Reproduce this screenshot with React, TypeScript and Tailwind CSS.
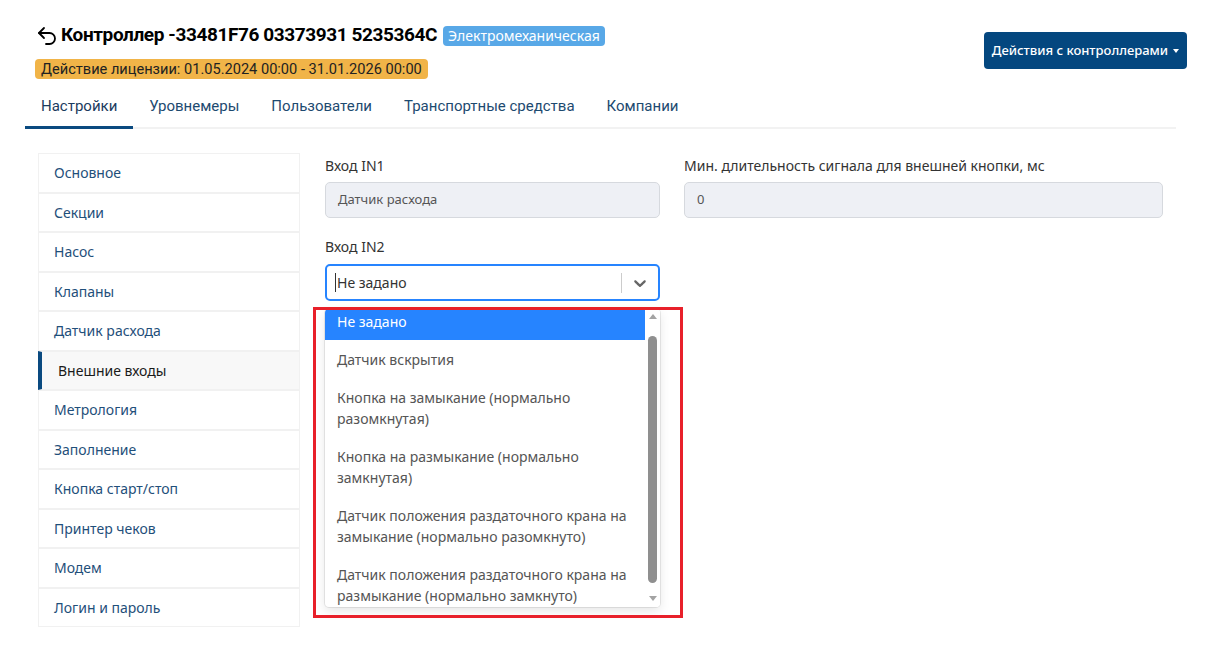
import { Undo2 } from "lucide-react";

const sideItems = [
    'Основное',
    'Секции',
    'Насос',
    'Клапаны',
    'Датчик расхода',
    'Внешние входы',
    'Метрология',
    'Заполнение',
    'Кнопка старт/стоп',
    'Принтер чеков',
    'Модем',
    'Логин и пароль',
];

const tabs = ['Настройки', 'Уровнемеры', 'Пользователи', 'Транспортные средства', 'Компании'];

const options: string[][] = [
    ['Не задано'],
    ['Датчик вскрытия'],
    ['Кнопка на замыкание (нормально', 'разомкнутая)'],
    ['Кнопка на размыкание (нормально', 'замкнутая)'],
    ['Датчик положения раздаточного крана на', 'замыкание (нормально разомкнуто)'],
    ['Датчик положения раздаточного крана на', 'размыкание (нормально замкнуто)'],
];

const App = () => {
    const activeSide = 'Внешние входы';

    return (
        <div className="min-h-screen bg-white px-[25px] pt-[25px] font-['Noto_Sans',sans-serif]">
            {/* header */}
            <div className="flex items-center justify-between pl-[11px] pr-[1px]">
                <div className="flex flex-col">
                    <div className="flex items-center h-[21px]">
                        <Undo2 size={24} strokeWidth={1.8} className="text-black -ml-[1px] mr-[2px]" />
                        <span className="font-['Roboto',sans-serif] font-bold text-[19px] text-black tracking-[-0.4px]">
                            Контроллер -33481F76 03373931 5235364C
                        </span>
                        <span className="ml-[6px] bg-[#58a8e7] text-white text-[14px] leading-[20px] px-[5px] rounded-[4px]">
                            Электромеханическая
                        </span>
                    </div>
                    <div className="mt-[10px] -ml-[1px]">
                        <span className="inline-block bg-[#f1b448] text-[#222] font-['Roboto',sans-serif] text-[14.6px] leading-[20px] px-[6px] rounded-[4px]">
                            Действие лицензии: 01.05.2024 00:00 - 31.01.2026 00:00
                        </span>
                    </div>
                </div>
                <button className="-mt-[4px] h-[37px] w-[203px] bg-[#04477f] text-white text-[13px] font-medium rounded-[4px] flex items-center justify-center gap-[5px]">
                    Действия с контроллерами
                    <span className="w-0 h-0 border-l-[3.5px] border-r-[3.5px] border-t-[4px] border-l-transparent border-r-transparent border-t-white" />
                </button>
            </div>

            {/* tabs */}
            <div className="flex mt-[6px] mr-[12px] border-b-2 border-[#f2f2f2] font-['Roboto',sans-serif] text-[15px]">
                {tabs.map((t, i) => (
                    <div
                        key={t}
                        className={`px-4 pt-2 pb-2 leading-[24px] -mb-[2px] border-b-[3px] ${i === 0 ? 'border-[#0a4a80] text-[#1b3b5e]' : 'border-transparent text-[#1d4a70]'}`}
                    >
                        {t}
                    </div>
                ))}
            </div>

            {/* body */}
            <div className="flex mt-[24px] pl-[13px]">
                <div className="w-[262px] flex flex-col">
                    {sideItems.map(s => (
                        <div
                            key={s}
                            className={`h-[39.5px] flex items-center border border-[#f1f1f1] text-[14px] ${s === activeSide ? 'bg-[#f8f8f8] border-l-4 border-l-[#0a4a80] pl-[16px] text-[#1a1a1a]' : 'pl-[15px] text-[#1f4f7a]'}`}
                        >
                            {s}
                        </div>
                    ))}
                </div>

                <div className="ml-[25px] mt-[1px] grid grid-cols-[335px_479px] gap-x-6 content-start text-[14px] text-[#333]">
                    <div>
                        <div className="leading-[21px] mt-[1px]">Вход IN1</div>
                        <div className="mt-[6px] h-[36px] bg-[#eef0f5] border border-[#d6d9de] rounded-[5px] flex items-center px-3 text-[13px] text-[#555]">
                            Датчик расхода
                        </div>
                    </div>
                    <div>
                        <div className="leading-[21px] mt-[1px]">Мин. длительность сигнала для внешней кнопки, мс</div>
                        <div className="mt-[6px] h-[36px] bg-[#eef0f5] border border-[#d6d9de] rounded-[5px] flex items-center px-3 text-[13px] text-[#555]">
                            0
                        </div>
                    </div>
                    <div className="mt-[18px]">
                        <div className="leading-[21px]">Вход IN2</div>
                        <div className="mt-[7px] h-[37px] border-2 border-[#2684ff] rounded-[5px] flex items-center">
                            <div className="flex-1 flex items-center pl-[8px] text-[14px] text-[#333]">
                                <span className="w-px h-[19px] bg-[#333] mr-[1px]" />
                                Не задано
                            </div>
                            <div className="w-px h-[20px] bg-[#cccccc]" />
                            <div className="w-[36px] flex items-center justify-center text-[#666]">
                                <svg width="20" height="20" viewBox="0 0 20 20" fill="currentColor">
                                    <path d="M4.516 7.548c0.436-0.446 1.043-0.481 1.576 0l3.908 3.747 3.908-3.747c0.533-0.481 1.141-0.446 1.574 0 0.436 0.445 0.408 1.197 0 1.615-0.406 0.418-4.695 4.502-4.695 4.502-0.217 0.223-0.502 0.335-0.787 0.335s-0.57-0.112-0.789-0.335c0 0-4.287-4.084-4.695-4.502s-0.436-1.17 0-1.615z" />
                                </svg>
                            </div>
                        </div>

                        {/* open menu */}
                        <div className="relative mt-[8px]">
                            <div className="h-[298px] bg-white rounded-[4px] shadow-[0_0_0_1px_rgba(0,0,0,0.08),0_4px_11px_rgba(0,0,0,0.1)] overflow-hidden flex">
                                <div className="flex-1 -mt-[7px]">
                                    {options.map((o, i) => (
                                        <div
                                            key={i}
                                            className={`px-3 py-[8.5px] leading-[21px] text-[14px] ${i === 0 ? 'bg-[#2684ff] text-white' : 'text-[#555]'}`}
                                        >
                                            {o.map((line, j) => (
                                                <div key={j}>{line}</div>
                                            ))}
                                        </div>
                                    ))}
                                </div>
                                <div className="w-[15px] flex flex-col items-center bg-white">
                                    <div className="mt-[5px] w-0 h-0 border-l-[4px] border-r-[4px] border-b-[5px] border-l-transparent border-r-transparent border-b-[#a3a3a3]" />
                                    <div className="mt-[17px] w-[9px] h-[247px] rounded-full bg-[#8f8f8f]" />
                                    <div className="mt-[13px] w-0 h-0 border-l-[4px] border-r-[4px] border-t-[5px] border-l-transparent border-r-transparent border-t-[#a3a3a3]" />
                                </div>
                            </div>
                            <div className="absolute -left-[12px] -top-[2px] w-[370px] h-[311px] border-[3px] border-[#e8202a] pointer-events-none" />
                        </div>
                    </div>
                </div>
            </div>
        </div>
    );
};

export default App;
